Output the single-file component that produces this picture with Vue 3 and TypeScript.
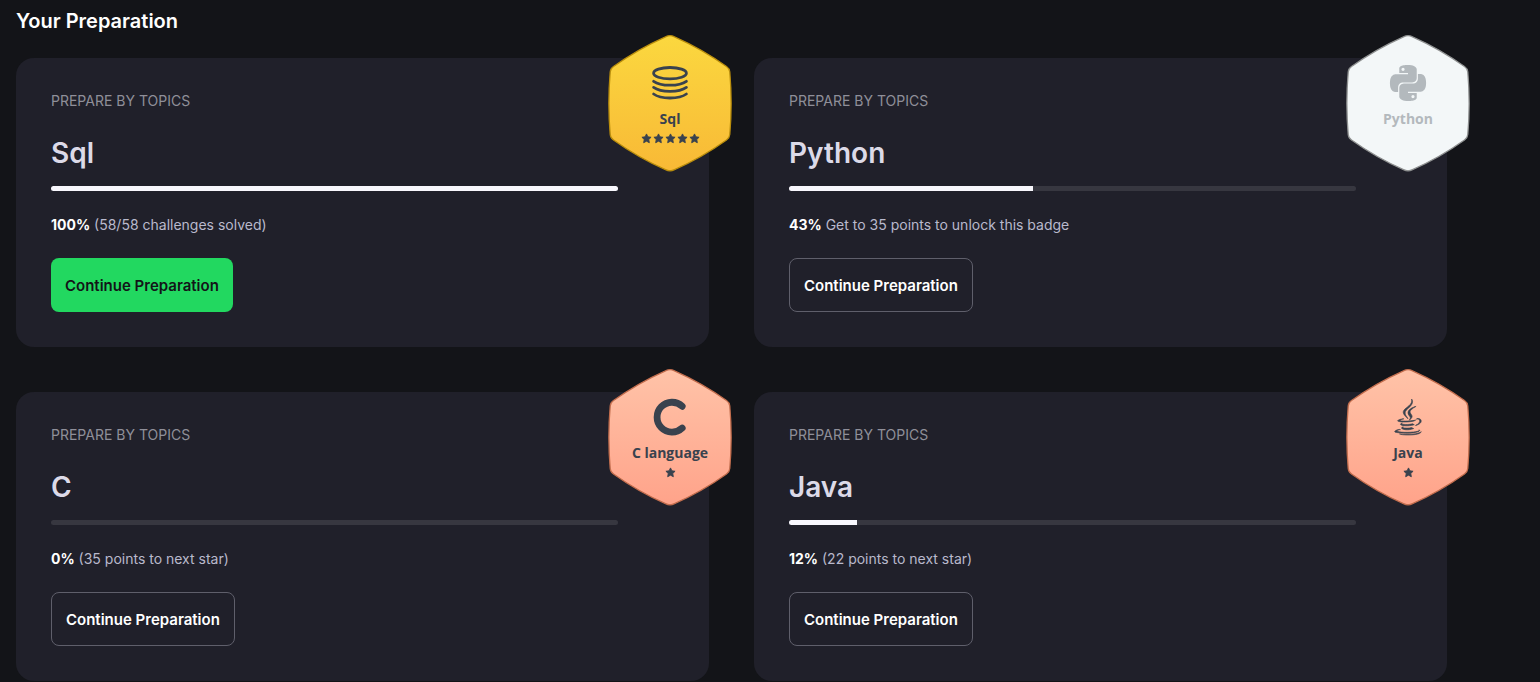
<script setup lang="ts">
type Icon = 'sql' | 'python' | 'c' | 'java'
type Tone = 'gold' | 'locked' | 'bronze'

interface Topic {
  title: string
  badge: string
  icon: Icon
  tone: Tone
  stars: number
  percent: number
  note: string
  primary: boolean
}

const topics: Topic[] = [
  { title: 'Sql', badge: 'Sql', icon: 'sql', tone: 'gold', stars: 5, percent: 100, note: '(58/58 challenges solved)', primary: true },
  { title: 'Python', badge: 'Python', icon: 'python', tone: 'locked', stars: 0, percent: 43, note: 'Get to 35 points to unlock this badge', primary: false },
  { title: 'C', badge: 'C language', icon: 'c', tone: 'bronze', stars: 1, percent: 0, note: '(35 points to next star)', primary: false },
  { title: 'Java', badge: 'Java', icon: 'java', tone: 'bronze', stars: 1, percent: 12, note: '(22 points to next star)', primary: false },
]

const tones: Record<Tone, { from: string; to: string; edge: string }> = {
  gold: { from: '#fbd83f', to: '#f8b936', edge: '#b98d0c' },
  locked: { from: '#f3f7f8', to: '#f3f7f8', edge: '#8e9090' },
  bronze: { from: '#ffc3a8', to: '#ffa38a', edge: '#c26d4d' },
}
</script>

<template>
  <main class="page">
    <h1 class="heading">Your Preparation</h1>
    <div class="grid">
      <article v-for="t in topics" :key="t.title" class="card">
        <p class="label">PREPARE BY TOPICS</p>
        <h2 class="title">{{ t.title }}</h2>
        <div class="track" role="progressbar" :aria-label="t.title" :aria-valuenow="t.percent" aria-valuemin="0" aria-valuemax="100">
          <div class="fill" :style="{ width: t.percent + '%' }"></div>
        </div>
        <p class="stats"><strong>{{ t.percent }}%</strong> {{ t.note }}</p>
        <button type="button" class="action" :class="{ primary: t.primary }">Continue Preparation</button>

        <div class="badge" :class="t.tone">
          <svg class="hex" viewBox="0 0 124 137" aria-hidden="true">
            <defs>
              <linearGradient :id="'fill-' + t.icon" x1="0" y1="0" x2="0" y2="1">
                <stop offset="0" :stop-color="tones[t.tone].from" />
                <stop offset="1" :stop-color="tones[t.tone].to" />
              </linearGradient>
            </defs>
            <path
              d="M57.5 1.8Q62 -.4 66.500 1.800Q94 14 118.500 31.500Q121.500 33.500 121.800 37Q124.500 68.500 121.800 99.500Q121.500 103 118.500 105Q94 122.500 66.500 134.700Q62 136.900 57.500 134.700Q30 122.500 5.500 105Q2.500 103 2.200 99.500Q-.5 68.500 2.200 37Q2.500 33.500 5.500 31.500Q30 14 57.500 1.800Z"
              :fill="`url(#fill-${t.icon})`"
              :stroke="tones[t.tone].edge"
              stroke-width="1.3"
            />
          </svg>

          <svg v-if="t.icon === 'sql'" class="icon" viewBox="0 0 36 36" fill="none" stroke="currentColor" stroke-width="2.8" stroke-linecap="round" aria-hidden="true">
            <ellipse cx="18" cy="8.200" rx="16.400" ry="5.700" />
            <path d="M1.600 16.300Q7 20.200 18 20.200T34.400 16.300M1.600 22.400Q7 26.300 18 26.300T34.400 22.400M1.600 29Q7 33 18 33T34.400 29" />
          </svg>
          <svg v-else-if="t.icon === 'python'" class="icon" viewBox="0 0 24 24" fill="currentColor" aria-hidden="true">
            <path d="M14.25.18l.9.2.73.26.59.3.45.32.34.34.25.34.16.33.1.3.04.26.02.2-.01.13V8.5l-.05.63-.13.55-.21.46-.26.38-.3.31-.33.25-.35.19-.35.14-.33.1-.3.07-.26.04-.21.02H8.77l-.69.05-.59.14-.5.22-.41.27-.33.32-.27.35-.2.36-.15.37-.1.35-.07.32-.04.27-.02.21v3.06H3.17l-.21-.03-.28-.07-.32-.12-.35-.18-.36-.26-.36-.36-.35-.46-.32-.59-.28-.73-.21-.88-.14-1.05-.05-1.23.06-1.22.16-1.04.24-.87.32-.71.36-.57.4-.44.42-.33.42-.24.4-.16.36-.1.32-.05.24-.01h.16l.06.01h8.16v-.83H6.18l-.01-2.75-.02-.37.05-.34.11-.31.17-.28.25-.26.31-.23.38-.2.44-.18.51-.15.58-.12.64-.1.71-.06.77-.04.84-.02 1.27.05zm-6.3 1.98l-.23.33-.08.41.08.41.23.34.33.22.41.09.41-.09.33-.22.23-.34.08-.41-.08-.41-.23-.33-.33-.22-.41-.09-.41.09zm13.09 3.95l.28.06.32.12.35.18.36.27.36.35.35.47.32.59.28.73.21.88.14 1.04.05 1.23-.06 1.23-.16 1.04-.24.86-.32.71-.36.57-.4.45-.42.33-.42.24-.4.16-.36.09-.32.05-.24.02-.16-.01h-8.22v.82h5.84l.01 2.76.02.36-.05.34-.11.31-.17.29-.25.25-.31.24-.38.2-.44.17-.51.15-.58.13-.64.09-.71.07-.77.04-.84.01-1.27-.04-1.07-.14-.9-.2-.73-.25-.59-.3-.45-.33-.34-.34-.25-.34-.16-.33-.1-.3-.04-.25-.02-.2.01-.13v-5.34l.05-.64.13-.54.21-.46.26-.38.3-.32.33-.24.35-.2.35-.14.33-.1.3-.06.26-.04.21-.02.13-.01h5.84l.69-.05.59-.14.5-.21.41-.28.33-.32.27-.35.2-.36.15-.36.1-.35.07-.32.04-.28.02-.21V6.07h2.09l.14.01zm-6.47 14.25l-.23.33-.08.41.08.41.23.33.33.23.41.08.41-.08.33-.23.23-.33.08-.41-.08-.41-.23-.33-.33-.23-.41-.08-.41.08z" />
          </svg>
          <svg v-else-if="t.icon === 'c'" class="icon" viewBox="0 0 36 36" fill="none" stroke="currentColor" stroke-width="6.8" stroke-linecap="round" aria-hidden="true">
            <path d="M30.200 7.300A14.900 14.900 0 1 0 30.200 29" />
          </svg>
          <svg v-else class="icon" viewBox="0 0 384 512" fill="currentColor" stroke="currentColor" stroke-width="9" aria-hidden="true">
            <path d="M277.74 312.9c9.8-6.7 23.4-12.5 23.4-12.5s-38.7 7-77.2 10.2c-47.1 3.9-97.7 4.7-123.1 1.3-60.1-8 33-30.1 33-30.1s-36.1-2.4-80.6 19c-52.5 25.4 130 37 224.5 12.1zm-85.4-32.1c-19-42.7-83.1-80.2 0-145.8C296 53.2 242.84 0 242.84 0c21.5 84.5-75.6 110.1-110.7 162.6-23.9 35.9 11.7 74.4 60.2 118.2zm114.6-176.2c.1 0-175.2 43.8-91.5 140.2 24.7 28.4-6.5 54-6.5 54s62.7-32.4 33.9-72.9c-26.9-37.8-47.5-56.6 64.1-121.3zm-6.1 270.5a12.19 12.19 0 0 1-2 2.6c128.3-33.7 81.1-118.9 19.8-97.3a17.33 17.33 0 0 0-8.2 6.3 70.45 70.45 0 0 1 11-3c31-6.5 75.5 41.5-20.6 91.4zM348 437.4s14.5 11.9-15.9 21.2c-57.9 17.5-240.8 22.8-291.6.7-18.3-7.9 16-19 26.8-21.3 11.2-2.4 17.7-2 17.7-2-20.3-14.3-131.3 28.1-56.4 40.2C232.84 509.4 401 461.3 348 437.4zM124.44 396c-78.7 22 47.9 67.4 148.1 24.5a185.89 185.89 0 0 1-28.2-13.8c-44.7 8.5-65.4 9.1-106 4.5-33.5-3.8-13.9-15.2-13.9-15.2zm179.8 97.2c-78.7 14.8-175.8 13.1-233.3 3.6 0-.1 11.8 9.7 72.4 13.6 92.2 5.9 233.8-3.3 237.1-46.9 0 0-6.4 16.5-76.2 29.7zM260.64 353c-59.2 11.4-93.5 11.1-136.8 6.6-33.5-3.5-11.6-19.7-11.6-19.7-86.8 28.8 48.2 61.4 169.5 25.9a60.37 60.37 0 0 1-21.1-12.8z" />
          </svg>

          <span class="name">{{ t.badge }}</span>
          <div v-if="t.stars" class="stars">
            <svg v-for="n in t.stars" :key="n" class="star" viewBox="0 0 24 24" fill="currentColor" stroke="currentColor" stroke-width="2" stroke-linejoin="round" aria-hidden="true">
              <path d="M12 2l3 6.400 7 .9-5.100 4.900 1.300 7L12 17.800 5.800 21.200l1.300-7L2 9.300l7-.9z" />
            </svg>
          </div>
        </div>
      </article>
    </div>
  </main>
</template>

<style>
body {
  margin: 0;
  background: #131418;
}
</style>

<style scoped>
.page {
  box-sizing: border-box;
  padding: 8px 93px 1px 16px;
  background: #131418;
  font-family: Inter, 'Liberation Sans', sans-serif;
}

.heading,
.title,
.label,
.stats {
  margin: 0;
}

.heading {
  font-size: 20px;
  line-height: 26px;
  font-weight: 600;
  color: #fff;
}

.grid {
  display: grid;
  grid-template-columns: repeat(2, minmax(0, 1fr));
  gap: 45px;
  margin-top: 24px;
}

.card {
  position: relative;
  display: flex;
  flex-direction: column;
  align-items: flex-start;
  padding: 35px 91px 35px 35px;
  border-radius: 18px;
  background: #20202a;
}

.label {
  font-size: 14px;
  line-height: 16px;
  color: #8f8f99;
}

.title {
  margin-top: 24px;
  font-size: 28px;
  line-height: 40px;
  font-weight: 600;
  color: #dcdae8;
}

.track {
  align-self: stretch;
  height: 5px;
  margin-top: 13px;
  border-radius: 3px;
  overflow: hidden;
  background: #373740;
}

.fill {
  height: 100%;
  background: #f8f7fd;
}

.stats {
  margin-top: 24px;
  font-size: 14px;
  line-height: 20px;
  color: #b9b9cc;
}

.stats strong {
  font-weight: 700;
  color: #fff;
}

.action {
  height: 54px;
  margin-top: 23px;
  padding: 0 14px;
  border: 1px solid #5f5f6b;
  border-radius: 8px;
  background: transparent;
  color: #fff;
  font-family: inherit;
  font-size: 15px;
  font-weight: 600;
  cursor: pointer;
}

.action.primary {
  border: 0;
  background: #22d860;
  color: #131418;
}

.badge {
  position: absolute;
  top: -23px;
  right: -23px;
  box-sizing: border-box;
  display: flex;
  flex-direction: column;
  align-items: center;
  width: 124px;
  height: 137px;
  padding-top: 30px;
  color: #39424e;
}

.badge.locked {
  color: #b3b9bd;
}

.hex {
  position: absolute;
  inset: 0;
  width: 100%;
  height: 100%;
}

.icon {
  position: relative;
  width: 36px;
  height: 36px;
  overflow: visible;
}

.name {
  position: relative;
  margin-top: 8px;
  font-family: 'Open Sans', 'Noto Sans', sans-serif;
  font-size: 14px;
  line-height: 20px;
  font-weight: 700;
}

.stars {
  position: relative;
  display: flex;
  gap: 1px;
  margin-top: 4px;
}

.star {
  width: 11px;
  height: 11px;
}
</style>
